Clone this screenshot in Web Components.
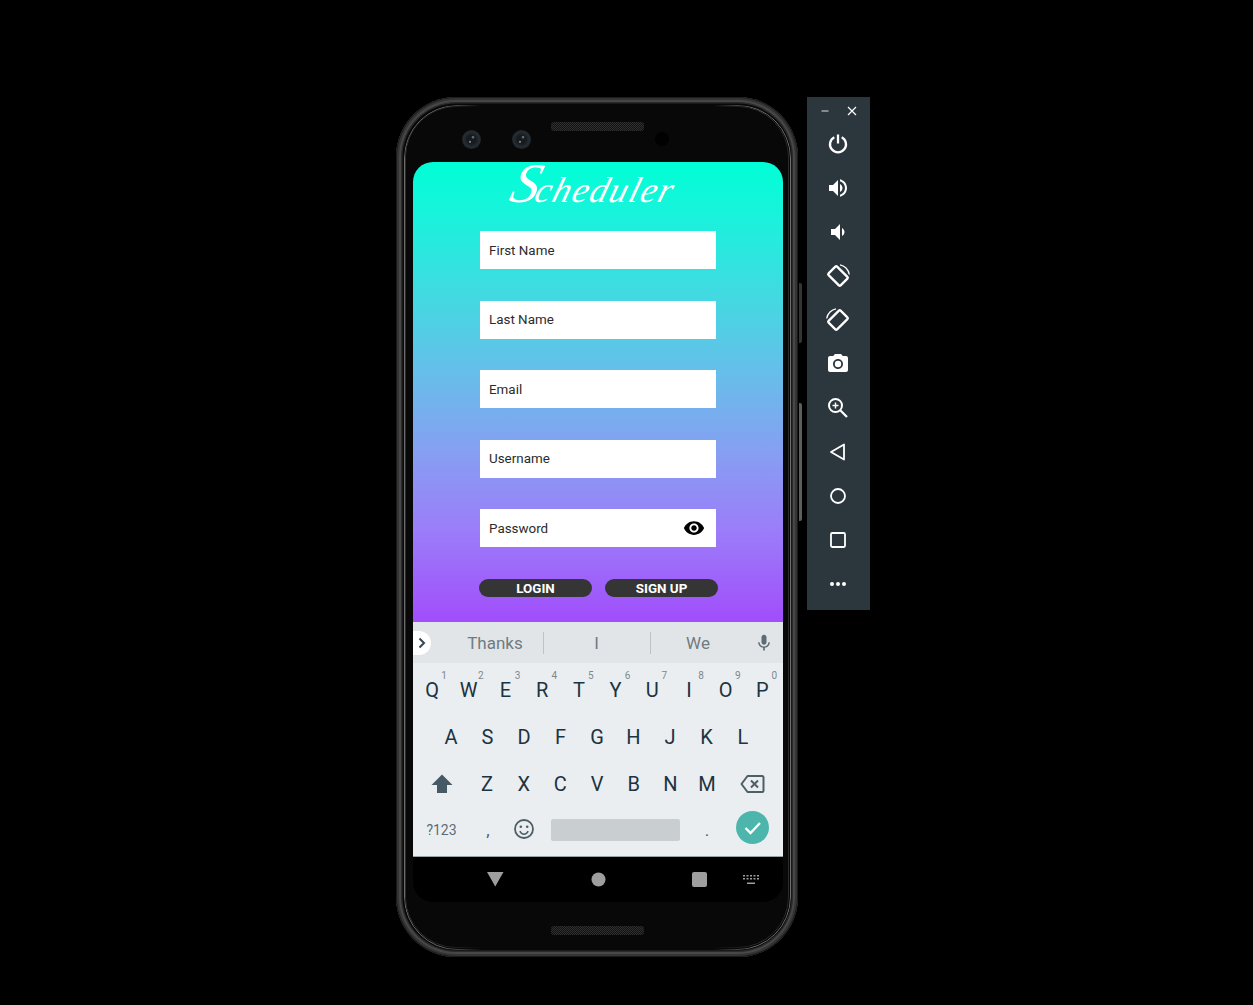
<!DOCTYPE html>
<html><head><meta charset="utf-8">
<style>
html,body{margin:0;background:#000;}
body{height:1005px;overflow:hidden;font-family:Roboto,"Liberation Sans",sans-serif;}
</style></head><body>
<emulator-stage>
  <phone-frame>
    <app-screen>
      <signup-form slot="app">
        <text-field label="First Name"></text-field>
        <text-field label="Last Name"></text-field>
        <text-field label="Email"></text-field>
        <text-field label="Username"></text-field>
        <text-field label="Password" eye></text-field>
      </signup-form>
      <soft-keyboard slot="kbd"></soft-keyboard>
      <nav-bar slot="nav"></nav-bar>
    </app-screen>
  </phone-frame>
  <emulator-toolbar></emulator-toolbar>
</emulator-stage>
<script>
const def=(n,html)=>{customElements.define(n,class extends HTMLElement{
  connectedCallback(){ if(this.shadowRoot)return; const r=this.attachShadow({mode:'open'});
    r.innerHTML=typeof html==='function'?html(this):html; }
});};
def('emulator-stage','<style>:host{display:flex;align-items:flex-start;padding:97px 0 0 396px;gap:9px}</style><slot></slot>');
const speaker=`background-color:#161616;background-image:repeating-conic-gradient(#303030 0 25%,#121212 0 50%);background-size:2px 2px;border-radius:3px;width:93px;height:9px;`;
def('phone-frame',`<style>
:host{display:block;position:relative;width:402px;height:860px;flex:none}
.shell{position:relative;box-sizing:border-box;width:100%;height:100%;border-radius:60px;background:#080808;
 box-shadow:inset 0 0 0 1px #1a1a1a,inset 0 0 0 3px #343434,inset 0 0 0 5px #474747,inset 0 0 0 6.5px #2a2a2a;
 display:flex;flex-direction:column;align-items:stretch;padding:0 15px 0 17px}
.rim{position:absolute;inset:7.5px;border-radius:53px;border:1.5px solid #6e6e6e;pointer-events:none;
 -webkit-mask-image:linear-gradient(90deg,#000 0 9%,transparent 20% 80%,#000 91%);mask-image:linear-gradient(90deg,#000 0 9%,transparent 20% 80%,#000 91%)}
.rim.two{inset:9px;border-radius:51px;border:1.5px solid #2a2a2a}
.top{height:65px;flex:none;display:flex;align-items:flex-start;position:relative}
.cam{width:19px;height:19px;border-radius:50%;margin-top:32.5px;flex:none;
 background:radial-gradient(circle at 42% 62%,#7d8286 0 4%,transparent 9%),radial-gradient(circle at 58% 38%,#666b70 0 5%,transparent 11%),radial-gradient(circle,#161b20 0 32%,#252c32 55%,#1c2227 80%,#13171a)}
.cam.a{margin-left:48.5px}.cam.b{margin-left:31px}
.sp{${speaker}margin:25px 0 0 20.5px;flex:none}
.hole{width:14px;height:14px;border-radius:50%;background:#010101;margin:35px 0 0 11px;flex:none}
.bot{flex:1;display:flex;justify-content:center;align-items:flex-start;position:relative}
.bot .sp{margin:24px 0 0 -2px}
.btn{position:absolute;left:403px;width:3px;background:#353535;border-radius:0 2px 2px 0}
.b1{top:186px;height:60px}.b2{top:306px;height:118px;background:#5e5e5e}
</style>
<div class="shell"><span class="rim"></span><span class="rim two"></span><div class="top"><span class="cam a"></span><span class="cam b"></span><span class="sp"></span><span class="hole"></span></div>
<slot></slot><div class="bot"><span class="sp"></span></div></div>
<span class="btn b1"></span><span class="btn b2"></span>`);
def('app-screen',`<style>
:host{display:flex;flex-direction:column;width:370px;height:740px;flex:none;position:relative}
.app{height:460px;flex:none;border-radius:20px 20px 0 0;background:linear-gradient(180deg,#00ffd6 0%,#1af2dc 12%,#44d8e2 30%,#69bcea 47%,#869ff2 63%,#9b7df9 80%,#a14dfb 100%)}
</style><div class="app"><slot name="app"></slot></div><slot name="kbd"></slot><slot name="nav"></slot>`);
def('signup-form',`<style>
:host{display:flex;flex-direction:column;height:100%;align-items:flex-start;padding-left:67px;box-sizing:border-box}
h1{margin:0;height:69px;width:236px;box-sizing:border-box;font:italic 400 36px/42px "Liberation Serif",serif;color:#fff;letter-spacing:1.6px;white-space:nowrap;transform:translateX(28px) skewX(-16deg);transform-origin:0 39px}
h1::first-letter{font-size:56px;letter-spacing:-3px}
.f{display:flex;flex-direction:column;gap:31.5px}
.btns{display:flex;gap:13px;margin-top:32px;margin-left:-1px}
</style><h1>Scheduler</h1><div class="f"><slot></slot></div><div class="btns"><pill-button>LOGIN</pill-button><pill-button>SIGN UP</pill-button></div>`);
def('text-field',el=>`<style>
:host{display:flex;align-items:center;justify-content:space-between;width:236px;height:38px;background:#fff;box-sizing:border-box;padding:0 11px 0 9px;font:13.4px Roboto,sans-serif;color:#2b2b2b}
svg{display:block}
</style><span>${el.getAttribute('label')}</span>${el.hasAttribute('eye')?'<svg width="22" height="22" viewBox="0 0 24 24"><path fill="#000" d="M12 4.5C7 4.5 2.73 7.61 1 12c1.73 4.39 6 7.5 11 7.5s9.27-3.11 11-7.5c-1.73-4.39-6-7.5-11-7.5zM12 17c-2.76 0-5-2.24-5-5s2.24-5 5-5 5 2.24 5 5-2.24 5-5 5zm0-8c-1.66 0-3 1.34-3 3s1.34 3 3 3 3-1.34 3-3-1.34-3-3-3z"/></svg>':''}`);
def('pill-button',`<style>
:host{display:flex;align-items:center;justify-content:center;width:113px;height:18px;border-radius:9px;background:#353535;color:#fff;font:700 13.4px/18px Roboto,sans-serif}
span{position:relative;top:1px}
</style><span><slot></slot></span>`);
def('kb-key',el=>`<style>
:host{display:flex;position:relative;align-items:center;justify-content:center;flex:1 1 0;min-width:0;color:#1c3340;font:20px Roboto,sans-serif;height:100%}
sup{position:absolute;top:4px;right:3.5px;font:10px/12px Roboto,sans-serif;color:#7d888d}
</style><slot></slot>${el.dataset.n?`<sup>${el.dataset.n}</sup>`:''}`);
const kr=(s)=>s.map(([k,n])=>`<kb-key${n!==undefined?` data-n="${n}"`:''}>${k}</kb-key>`).join('');
const row1=kr([...'QWERTYUIOP'].map((k,i)=>[k,(i+1)%10]));
const row2=kr([...'ASDFGHJKL'].map(k=>[k]));
const row3=kr([...'ZXCVBNM'].map(k=>[k]));
def('soft-keyboard',`<style>
:host{display:block;flex:none;font-family:Roboto,sans-serif}
.sug{height:41px;background:#e1e5e8;display:flex;align-items:center}
.chev{width:18px;height:24px;background:#fff;border-radius:0 12px 12px 0;display:flex;align-items:center;justify-content:center;flex:none}
.w{color:#6f7b81;font-size:17px;text-align:center;flex:none;line-height:22px;box-sizing:border-box}
.w.b{border-right:1px solid #bcc3c7}
.mic{margin-left:auto;margin-right:9px;display:block}
.kb{height:194px;background:#eaeef1;display:flex;flex-direction:column;box-sizing:border-box;padding-top:3px;border-bottom:1px solid #9aa0a3}
.r{height:47.3px;display:flex;align-items:center;flex:none}
.r.a{padding:0 2.3px 0 .7px}
.r.p{padding:0 21.8px 0 19.7px}
.shift{width:55.7px;flex:none;display:flex;justify-content:center;align-items:center;padding-left:1.500px;box-sizing:border-box}
.del{width:55px;flex:none;display:flex;justify-content:center;align-items:center}
.l{flex:none;width:256.7px;display:flex;height:100%}
.bot{display:flex;align-items:center;height:44px;color:#4d5e67;flex:none}
.bot>*{flex:none;text-align:center}
.space{width:129px;height:22px;background:#c9ced1;border-radius:2px}
</style>
<div class="sug"><div class="chev"><svg width="10" height="12" viewBox="0 0 10 12"><path d="M2.5 1.500 7 6 2.500 10.500" fill="none" stroke="#37474f" stroke-width="2"/></svg></div>
<div class="w b" style="width:113px;text-indent:16px">Thanks</div>
<div class="w b" style="width:107px;padding-right:1px">I</div>
<div class="w" style="width:94px">We</div>
<svg class="mic" width="20" height="20" viewBox="0 0 24 24"><path fill="#5d6c74" d="M12 14c1.66 0 3-1.34 3-3V5c0-1.66-1.34-3-3-3S9 3.34 9 5v6c0 1.66 1.34 3 3 3zm5.300-3c0 3-2.540 5.100-5.300 5.100S6.700 14 6.700 11H5c0 3.410 2.720 6.230 6 6.720V21h2v-3.280c3.280-.480 6-3.300 6-6.720h-1.700z"/></svg></div>
<div class="kb">
<div class="r a">${row1}</div>
<div class="r p">${row2}</div>
<div class="r"><div class="shift"><svg width="24" height="24" viewBox="0 0 24 24"><path fill="#455a64" d="M12 2.500 1.500 13H7v8h10v-8h5.500z"/></svg></div><div class="l">${row3}</div><div class="del"><svg width="25" height="20" viewBox="0 0 25 20"><path d="M7.500 2H22a1.500 1.500 0 0 1 1.500 1.500v13A1.500 1.500 0 0 1 22 18H7.500L1.500 10z" fill="none" stroke="#4d5e67" stroke-width="2" stroke-linejoin="round"/><path d="M11 6.500l7 7m0-7l-7 7" stroke="#4d5e67" stroke-width="2"/></svg></div></div>
<div class="bot">
<div style="width:57px;font-size:14px;color:#5d6c74">?123</div>
<div style="width:36px;font-size:17px">,</div>
<svg style="width:22px;height:22px;margin:0 7px;transform:translateY(-1px)" viewBox="0 0 22 22"><circle cx="11" cy="11" r="9" fill="none" stroke="#4d5e67" stroke-width="1.800"/><circle cx="7.800" cy="8.800" r="1.300" fill="#4d5e67"/><circle cx="14.200" cy="8.800" r="1.300" fill="#4d5e67"/><path d="M6.800 13.200c1 2 2.500 3 4.200 3s3.200-1 4.200-3" fill="none" stroke="#4d5e67" stroke-width="1.500"/></svg>
<div class="space" style="margin-left:9px"></div>
<div style="width:54px;font-size:17px">.</div>
<svg style="width:33px;height:33px;margin-left:2px;transform:translateY(-2px)" viewBox="0 0 33 33"><circle cx="16.500" cy="16.500" r="16.500" fill="#4db6ac"/><path d="M9.500 17l5 5 9.500-10" fill="none" stroke="#fff" stroke-width="2.300"/></svg>
</div></div>`);
def('nav-bar',`<style>
:host{display:flex;flex:none;height:45px;background:#000;align-items:center;border-radius:0 0 20px 20px}
svg{display:block;flex:none}
</style>
<svg style="margin-left:74px" width="17" height="15" viewBox="0 0 17 15"><path d="M0 0h16.500L8.250 14.500z" fill="#9e9e9e"/></svg>
<svg style="margin-left:86.500px" width="15" height="15" viewBox="0 0 15 15"><circle cx="7.500" cy="7.500" r="7" fill="#9e9e9e"/></svg>
<svg style="margin-left:86.500px" width="15" height="15" viewBox="0 0 15 15"><rect width="15" height="15" rx="2" fill="#9e9e9e"/></svg>
<svg style="margin-left:36px" width="16" height="12" viewBox="0 0 16 12"><g fill="#9e9e9e"><path d="M0 1h2v1.500H0zM3.500 1h2v1.500h-2zM7 1h2v1.500H7zM10.500 1h2v1.500h-2zM14 1h2v1.500h-2zM0 4h2v1.500H0zM3.500 4h2v1.500h-2zM7 4h2v1.500H7zM10.500 4h2v1.500h-2zM14 4h2v1.500h-2zM4 8.500h8V10H4z"/></g></svg>`);
const I={
power:'<path d="M8.300 5.200A8 8 0 1 0 15.700 5.200M12 2.500v9" fill="none" stroke="#fff" stroke-width="2.300"/>',
up:'<path fill="#fff" d="M3 9v6h4l5 5V4L7 9H3zm13.500 3c0-1.770-1.020-3.290-2.500-4.030v8.050c1.480-.730 2.500-2.250 2.500-4.020zM14 3.230v2.060c2.890.860 5 3.540 5 6.710s-2.110 5.850-5 6.710v2.060c4.010-.910 7-4.490 7-8.770s-2.990-7.860-7-8.770z"/>',
down:'<path fill="#fff" d="M18.500 12c0-1.770-1.020-3.290-2.500-4.030v8.050c1.480-.730 2.500-2.250 2.500-4.020zM5 9v6h4l5 5V4L9 9H5z"/>',
rl:'<g fill="none" stroke="#fff"><rect x="6" y="3.500" width="12" height="17" rx="1.200" stroke-width="2.300" transform="rotate(-45 12 12)"/><path d="M14 .8C18.500 1.500 22.500 5.500 23.300 10.500" stroke-width="1.300"/></g>',
rr:'<g fill="none" stroke="#fff"><rect x="6" y="3.500" width="12" height="17" rx="1.200" stroke-width="2.300" transform="rotate(45 12 12)"/><path d="M10 .8C5.500 1.500 1.500 5.500 .7 10.500" stroke-width="1.300"/></g>',
cam:'<path fill="#fff" d="M9 2L7.170 4H4c-1.100 0-2 .9-2 2v12c0 1.100.9 2 2 2h16c1.100 0 2-.9 2-2V6c0-1.100-.9-2-2-2h-3.170L15 2H9zm3 15c-2.760 0-5-2.240-5-5s2.240-5 5-5 5 2.240 5 5-2.240 5-5 5z"/><circle cx="12" cy="12" r="3.200" fill="#fff"/>',
zoom:'<g fill="none" stroke="#fff" stroke-width="2"><circle cx="9.500" cy="9.500" r="6.500"/><path d="M14.500 14.500 21 21" stroke-width="2.300"/><path d="M9.500 6.500v6M6.500 9.500h6" stroke-width="1.500"/></g>',
back:'<path d="M5 12 18 4.500v15z" fill="none" stroke="#fff" stroke-width="1.800" stroke-linejoin="round"/>',
home:'<circle cx="12" cy="12" r="7" fill="none" stroke="#fff" stroke-width="1.800"/>',
sq:'<rect x="5" y="5" width="14" height="14" rx="1.200" fill="none" stroke="#fff" stroke-width="1.800"/>',
more:'<g fill="#fff"><circle cx="6" cy="12" r="2"/><circle cx="12" cy="12" r="2"/><circle cx="18" cy="12" r="2"/></g>'};
def('tool-icon',el=>`<style>:host{display:flex;align-items:center;justify-content:center;height:44px;flex:none;padding-right:1px}svg{display:block}</style><svg width="24" height="24" viewBox="0 0 24 24">${I[el.getAttribute('name')]}</svg>`);
def('emulator-toolbar',`<style>
:host{display:flex;flex-direction:column;align-items:stretch;width:63px;height:513px;background:#2b363d;flex:none}
.w{height:25px;display:flex;align-items:center;padding-top:3px;flex:none;box-sizing:border-box}
.w svg{display:block}
</style>
<div class="w"><svg style="margin-left:13px" width="10" height="10" viewBox="0 0 10 10"><path d="M1.500 5h7" stroke="#a9b0b4" stroke-width="1.400"/></svg><svg style="margin-left:17px" width="10" height="10" viewBox="0 0 10 10"><path d="M1 1l8 8m0-8L1 9" stroke="#fff" stroke-width="1.200"/></svg></div>
${['power','up','down','rl','rr','cam','zoom','back','home','sq','more'].map(n=>`<tool-icon name="${n}"></tool-icon>`).join('')}`);
</script>
</body></html>
